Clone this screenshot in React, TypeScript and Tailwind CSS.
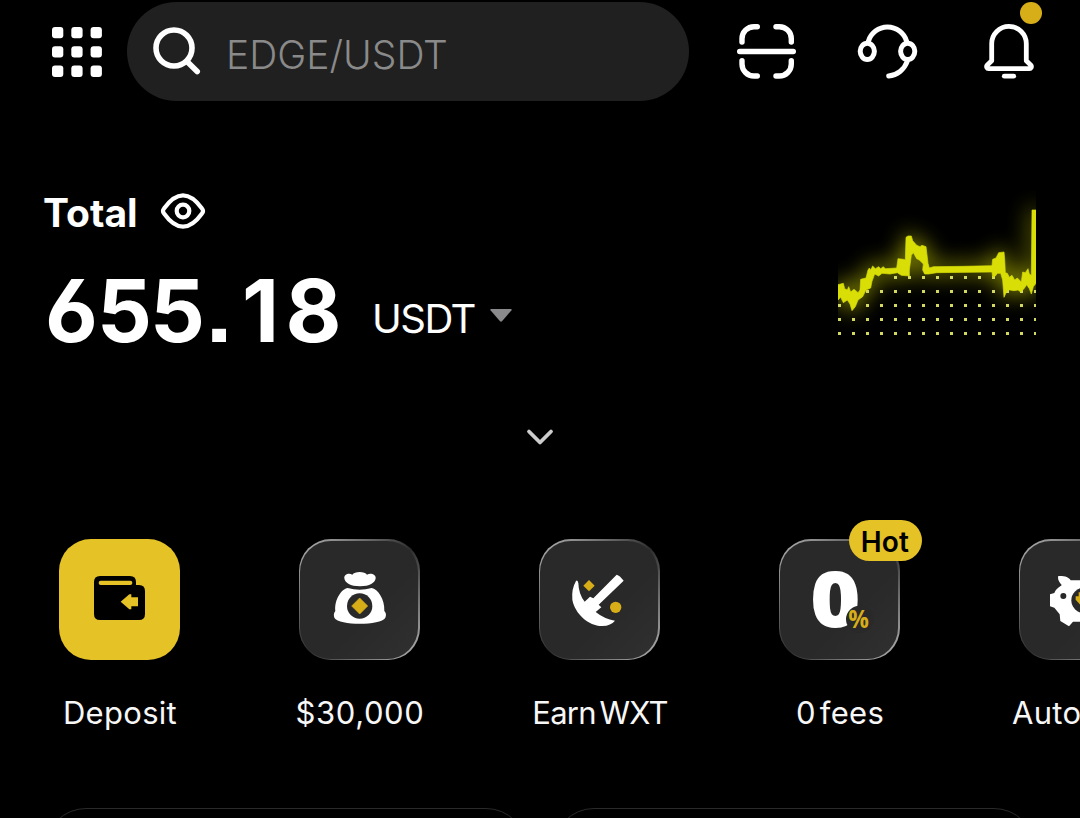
import React from 'react'

type TileProps = {
    label: string;
    labelClass?: string;
    accent?: boolean;
    badge?: string;
    children: React.ReactNode;
}

const chartLine =
    '0,284 8,282 16,280 20,296 28,300 32,290 38,306 48,298 60,308 66,300 68,268 84,264 90,240 94,234 98,240 104,228 112,236 122,230 128,236 136,230 142,236 176,234 180,206 196,208 202,210 204,142 210,138 220,138 224,152 236,166 246,170 252,166 264,170 270,220 274,234 286,230 376,229 462,227 464,208 474,204 482,188 498,186 500,206 502,248 508,250 514,262 522,256 530,270 538,264 550,276 554,246 562,248 570,236 574,252 580,256 582,60 594,60 ' +
    '594,280 586,290 580,312 574,296 566,284 558,296 548,306 540,300 528,302 516,300 508,300 498,322 494,270 488,250 478,250 472,258 464,262 462,246 296,248 272,252 260,252 254,240 256,222 244,210 236,206 226,188 220,196 214,240 214,258 190,256 178,248 156,252 132,250 122,258 110,252 102,274 98,294 84,300 74,320 60,330 52,350 42,362 36,342 28,330 16,338 8,322 0,330';

// first and last visible dot of each row
const dotRows = [
    { y: 258, from: 4, to: 11 },
    { y: 300, from: 2, to: 14 },
    { y: 342, from: 0, to: 14 },
    { y: 384, from: 0, to: 14 },
    { y: 426, from: 0, to: 14 },
];

const amount = '655.18';

function GridIcon() {
    return (
        <svg width="50" height="50" viewBox="0 0 50 50" fill="#fff" className="mt-[27px] shrink-0">
            {[0, 19.3, 38.6].map((y) =>
                [0, 19.3, 38.6].map((x) => (
                    <rect key={`${x}-${y}`} x={x} y={y} width="11.3" height="11.3" rx="3" />
                ))
            )}
        </svg>
    )
}

function ScanIcon() {
    return (
        <svg width="62" height="60" viewBox="0 0 62 60" fill="none" stroke="#fff" strokeWidth="5.4" strokeLinecap="round" className="ml-[47px] mt-[22px] shrink-0">
            <path d="M6 20v-3.3a12 12 0 0 1 12-12h3.3M40 4.7h3.3a12 12 0 0 1 12 12V20M6 38.7V42a12 12 0 0 0 12 12h3.3M40 54h3.3a12 12 0 0 0 12-12v-3.3M3.7 29.5h53.6" />
        </svg>
    )
}

function SupportIcon() {
    return (
        <svg width="64" height="60" viewBox="0 0 64 60" fill="none" stroke="#fff" strokeWidth="5" strokeLinecap="round" className="ml-[58px] mt-[22px] shrink-0">
            <ellipse cx="11.3" cy="29.3" rx="7.1" ry="8.1" />
            <ellipse cx="51.7" cy="29.3" rx="7.1" ry="8.1" />
            <path d="M12.3 19.5a20 20 0 0 1 38.4 0M51.2 39.5A22 22 0 0 1 32.7 54" />
        </svg>
    )
}

function BellIcon() {
    return (
        <div className="relative ml-[62px] mt-[22px] h-[60px] w-[54px] shrink-0">
            <svg width="54" height="60" viewBox="0 0 54 60" fill="none" stroke="#fff" strokeWidth="4.8" strokeLinecap="round" strokeLinejoin="round">
                <path d="M9.7 21.7v17l-4.6 4.5c-1.1 1.5-.2 3.4 1.5 3.4h40.8c1.7 0 2.6-1.9 1.5-3.4l-4.6-4.5v-17a17.3 17.3 0 0 0-34.6 0z" />
                <path d="M22.3 54.2h9.4" />
            </svg>
            <span className="absolute -top-5 left-[38px] size-[22px] rounded-full bg-[#d8ae18]" />
        </div>
    )
}

function Chart() {
    return (
        <svg width="198" height="160" viewBox="0 0 594 480" className="overflow-hidden">
            <defs>
                <filter id="glow" x="-20%" y="-50%" width="140%" height="200%">
                    <feGaussianBlur stdDeviation="32" />
                </filter>
            </defs>
            <polygon points={chartLine} fill="#d8de06" stroke="#d8de06" strokeWidth="12" opacity="0.65" filter="url(#glow)" />
            {dotRows.map((row) =>
                Array.from({ length: row.to - row.from + 1 }, (_, i) => (
                    <rect key={`${row.y}-${i}`} x={(row.from + i) * 42} y={row.y} width="9" height="9" fill="#d2d860" />
                ))
            )}
            <polygon points={chartLine} fill="#d8de06" stroke="#d8de06" strokeWidth="2" />
        </svg>
    )
}

function Tile({ label, labelClass = '', accent, badge, children }: TileProps) {
    return (
        <div className="flex w-60 shrink-0 flex-col items-center">
            <div className={accent
                ? 'relative size-[121px] rounded-[32px] bg-[#e5c226]'
                : 'relative size-[121px] rounded-[32px] bg-[linear-gradient(135deg,#a0a0a0_8%,#666_30%,#2c2c2c_50%,#666_70%,#a0a0a0_92%)] p-[1.5px]'}>
                <div className={accent ? 'size-full' : 'size-full rounded-[31px] bg-[linear-gradient(135deg,#292929_60%,#303030)]'} />
                <svg viewBox="0 0 363 363" className="absolute inset-0 size-[121px]">
                    {children}
                </svg>
                {badge && (
                    <span className="absolute -top-[19px] left-[70px] flex h-[41px] w-[73px] items-center justify-center rounded-full bg-[#e5c226] pt-[3px] text-[28px] font-semibold tracking-[0.2px] text-black">
                        {badge}
                    </span>
                )}
            </div>
            <p className={`ml-[2px] mt-[30px] whitespace-nowrap text-[31px] leading-[46px] text-[#f7f7f7] ${labelClass}`}>{label}</p>
        </div>
    )
}

function App() {
    return (
        <div className="flex h-[818px] w-[1080px] flex-col overflow-hidden bg-black font-['Inter','Noto_Sans',sans-serif] text-white">
            {/* Top bar */}
            <header className="flex h-[101px] shrink-0 items-start pl-[52px]">
                <GridIcon />
                <div className="ml-[25px] mt-[2px] flex h-[99px] w-[562px] shrink-0 items-center rounded-full bg-[#202020] pl-[24px]">
                    <svg width="52" height="52" viewBox="0 0 52 52" fill="none" stroke="#fff" strokeWidth="5.6" strokeLinecap="round" className="mt-px">
                        <circle cx="23" cy="22" r="18" />
                        <path d="M36.3 35.7l9.9 9.9" />
                    </svg>
                    <span className="ml-[23px] mt-[7px] text-[39px] font-[350] text-[#8a8a8a]">EDGE/USDT</span>
                </div>
                <ScanIcon />
                <SupportIcon />
                <BellIcon />
            </header>

            {/* Balance */}
            <section className="flex h-[299px] shrink-0 justify-between px-11 pt-[89px]">
                <div>
                    <div className="flex h-[46px] items-start">
                        <h1 className="-ml-px w-[95px] text-[39px] font-bold leading-[46px]">Total</h1>
                        <svg width="46" height="38" viewBox="0 0 46 38" fill="none" stroke="#fff" strokeWidth="4.2" className="ml-[22px] mt-[2px]">
                            <path d="M4 16.5C9 9.5 15 3.3 23 3.3s14 6.2 19 13.2q2 2.5 0 5C37 28.5 31 34.7 23 34.7S9 28.5 4 21.5q-2-2.5 0-5z" />
                            <circle cx="23" cy="19" r="6.3" />
                        </svg>
                    </div>
                    <div className="mt-[22px] flex h-[106px] items-baseline">
                        <div className="flex pl-px text-[86px] font-bold leading-[106px] [font-feature-settings:'cv03','ss07']">
                            {amount.split('').map((char, i) => (
                                <span key={i} className={char === '.' ? 'flex w-[30px] justify-center' : 'flex w-[53px] justify-center'}>{char}</span>
                            ))}
                        </div>
                        <span className="ml-[32px] -translate-y-[9px] text-[40px] leading-none tracking-[-1.5px]">USDT</span>
                        <svg width="22" height="13" viewBox="0 0 22 13" fill="#8a8a8c" className="ml-[15px] -translate-y-[20px]">
                            <path d="M1 0h20q1 .3.5 1.3L12 12.3q-1 .9-2 0L.5 1.3Q0 .3 1 0z" />
                        </svg>
                    </div>
                </div>
                <Chart />
            </section>

            <div className="flex h-[139px] shrink-0 justify-center pt-[28px]">
                <svg width="28" height="18" viewBox="0 0 28 18" fill="none" stroke="#ccc" strokeWidth="3.8" strokeLinecap="round" strokeLinejoin="round">
                    <path d="M3 3.5l11 11 11-11" />
                </svg>
            </div>

            {/* Shortcuts */}
            <nav className="-ml-px flex h-[269px] shrink-0">
                <Tile label="Deposit" labelClass="tracking-[0.3px]" accent>
                    <path d="M105 225V129q0-18 18-18h90q18 0 18 18v9h9q18 0 18 18v69q0 18-18 18H123q-18 0-18-18z" />
                    <rect x="119" y="125" width="101" height="13" rx="6" fill="#e5c226" />
                    <path d="M185 188l26-22h6v9h20v27h-20v9h-6z" fill="#e5c226" />
                </Tile>

                <Tile label="$30,000" labelClass="tracking-[0.6px]">
                    <g fill="#fff">
                        <path d="M136 118C134 106 150 100 160 107C166 96 198 96 204 107C214 100 232 106 230 118C228 132 212 142 183 142C154 142 138 132 136 118z" />
                        <path d="M146 147Q182 157 218 147C236 150 258 180 256 216Q264 224 259 236C245 260 120 260 106 236Q102 224 109 216C106 180 128 150 146 147z" />
                    </g>
                    <circle cx="182" cy="201" r="38" fill="#292929" />
                    <path d="M182 177l24 24-24 24-24-24z" fill="#d8ae18" stroke="#d8ae18" strokeWidth="2" strokeLinejoin="round" />
                </Tile>

                <Tile label="Earn WXT" labelClass="tracking-[-0.8px] [word-spacing:-4px]">
                    <path d="M111 126Q97 150 100 182C108 225 150 262 190 261Q216 260 228 245Q196 240 170 219L187 205L179 197L254 125Q242 109 233 107L163 178L153 173L137 188Q119 166 118 132Q115 122 111 126z" fill="#fff" />
                    <path d="M150 123l17 17-17 17-17-17z" fill="#d8ae18" />
                    <circle cx="230" cy="205" r="17" fill="#d8ae18" />
                </Tile>

                <Tile label="0 fees" labelClass="tracking-[0.3px] [word-spacing:-5px]" badge="Hot">
                    <text x="169" y="264" textAnchor="middle" textLength="152" lengthAdjust="spacingAndGlyphs" className="fill-white font-['Open_Sans'] text-[234px] font-extrabold">0</text>
                    <circle cx="242" cy="241" r="41" fill="#292929" />
                    <text x="208" y="268" textLength="62" lengthAdjust="spacingAndGlyphs" className="fill-[#d8ae18] font-['Open_Sans'] text-[77px] font-bold">%</text>
                </Tile>

                <Tile label="Auto" labelClass="w-[136px] tracking-[0.3px]">
                    <path d="M118 111C136 110 150 114 155 124H220C250 124 262 150 262 180C262 210 250 236 235 248V262H200V248H162L150 262L124 246L122 226L106 206L93 202V166L106 162C112 146 124 144 128 138Q114 122 118 111z" fill="#fff" />
                    <circle cx="133" cy="171" r="9" fill="#292929" />
                    <circle cx="195" cy="184" r="38" fill="#292929" />
                    <path d="M179 160h32v22h10l-26 28-25-28v-10h9z" fill="#d8ae18" />
                </Tile>
            </nav>

            {/* Cards */}
            <div className="flex shrink-0 gap-[26px] px-[45px]">
                <div className="h-40 flex-1 rounded-[41px] border border-[#2a2a2a]" />
                <div className="h-40 flex-1 rounded-[41px] border border-[#2a2a2a]" />
            </div>
        </div>
    );
}

export default App;
